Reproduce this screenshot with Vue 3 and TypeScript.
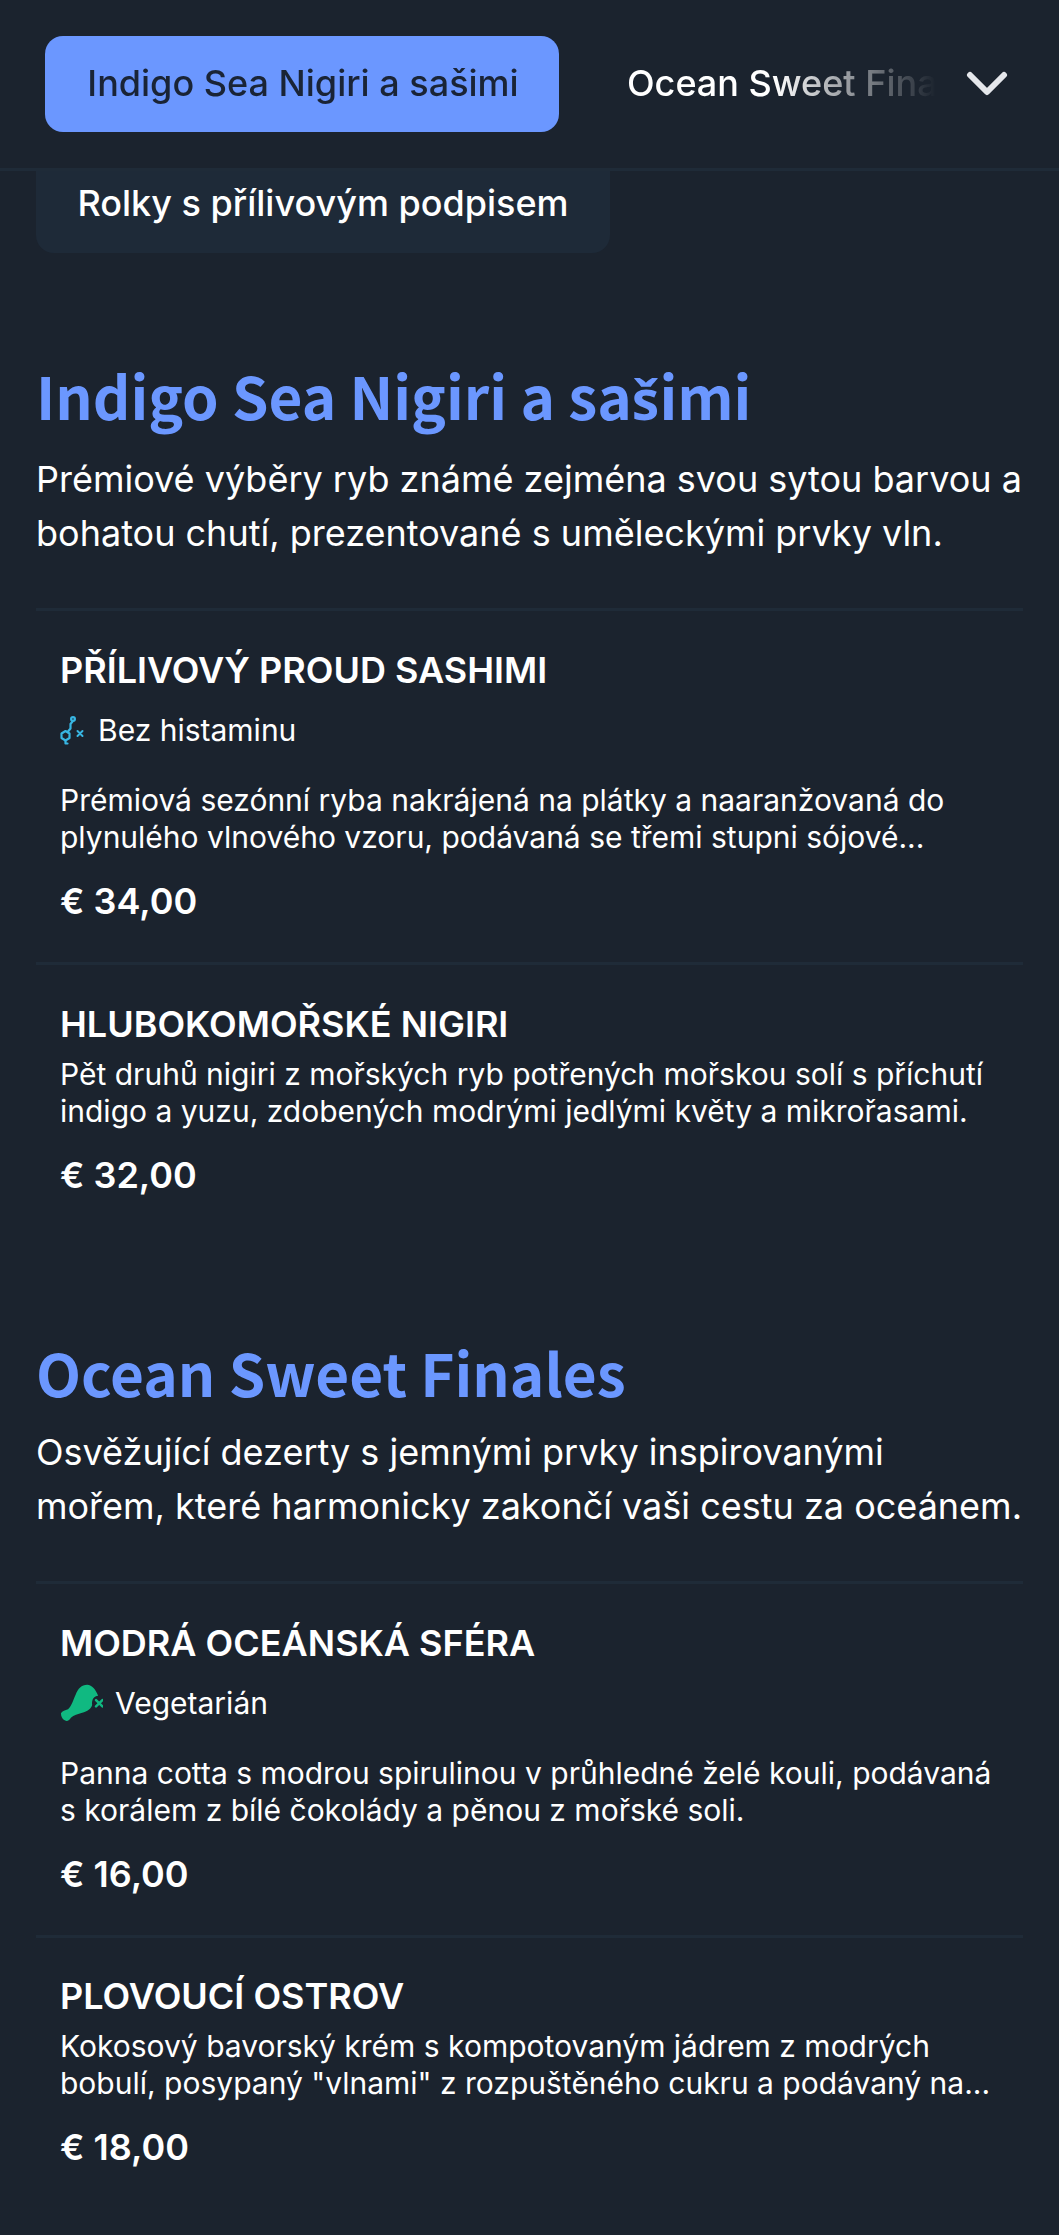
<script setup lang="ts">
interface Item { name: string; desc: string[]; price: string; tag?: 'his' | 'veg'; tagText?: string }
interface Section { title: string; desc: string[]; items: Item[] }
const sections: Section[] = [
  {
    title: 'Indigo Sea Nigiri a sašimi',
    desc: ['Prémiové výběry ryb známé zejména svou sytou barvou a', 'bohatou chutí, prezentované s uměleckými prvky vln.'],
    items: [
      { name: 'PŘÍLIVOVÝ PROUD SASHIMI', tag: 'his', tagText: 'Bez histaminu', desc: ['Prémiová sezónní ryba nakrájená na plátky a naaranžovaná do', 'plynulého vlnového vzoru, podávaná se třemi stupni sójové...'], price: '€ 34,00' },
      { name: 'HLUBOKOMOŘSKÉ NIGIRI', desc: ['Pět druhů nigiri z mořských ryb potřených mořskou solí s příchutí', 'indigo a yuzu, zdobených modrými jedlými květy a mikrořasami.'], price: '€ 32,00' },
    ],
  },
  {
    title: 'Ocean Sweet Finales',
    desc: ['Osvěžující dezerty s jemnými prvky inspirovanými', 'mořem, které harmonicky zakončí vaši cestu za oceánem.'],
    items: [
      { name: 'MODRÁ OCEÁNSKÁ SFÉRA', tag: 'veg', tagText: 'Vegetarián', desc: ['Panna cotta s modrou spirulinou v průhledné želé kouli, podávaná', 's korálem z bílé čokolády a pěnou z mořské soli.'], price: '€ 16,00' },
      { name: 'PLOVOUCÍ OSTROV', desc: ['Kokosový bavorský krém s kompotovaným jádrem z modrých', 'bobulí, posypaný "vlnami" z rozpuštěného cukru a podávaný na...'], price: '€ 18,00' },
    ],
  },
]
const titleParts = (t: string): string[] => t.split('š')
</script>

<template>
  <div class="page">
    <header class="bar">
      <div class="tabs">
        <button class="tab active">Indigo Sea Nigiri a sašimi</button>
        <span class="tab-next">Ocean Sweet Finales</span>
      </div>
      <svg class="chev" viewBox="0 0 42 26" fill="none" stroke="#e5e7eb" stroke-width="6" stroke-linecap="round" stroke-linejoin="round">
        <path d="M4 4 L21 21 L38 4" />
      </svg>
    </header>

    <div class="subwrap"><button class="subtab">Rolky s přílivovým podpisem</button></div>

    <section v-for="s in sections" :key="s.title" class="section">
      <h2><template v-for="(part, i) in titleParts(s.title)" :key="i"><span v-if="i > 0" class="caron">š</span>{{ part }}</template></h2>
      <p class="lead"><span v-for="l in s.desc" :key="l">{{ l }}</span></p>
      <article v-for="it in s.items" :key="it.name" class="item">
        <h3 :class="{ tight: !it.tag }">{{ it.name }}</h3>
        <div v-if="it.tag" class="tag">
          <svg v-if="it.tag === 'his'" class="ic-his" viewBox="0 0 26 32" fill="none" stroke="#38b6e3" stroke-width="2.2" stroke-linecap="round" stroke-linejoin="round">
            <path d="M5.5 17 L9.5 19.5 V24 L5.5 26.5 L1.5 24 V19.5 Z" />
            <path d="M5.5 26.5 V29.5 H7.5" />
            <path d="M8 17.5 L10.5 14.5 V10 L12.5 7.5" />
            <circle cx="13" cy="5" r="1.9" />
            <path d="M17.5 17 L22.5 22 M22.5 17 L17.5 22" stroke-width="2" />
          </svg>
          <svg v-else class="ic-veg" viewBox="0 0 120 110">
            <path fill="#10b981" d="M2 85 C6 78 14 78 22 74 C32 66 36 50 44 32 C50 16 60 5 76 5 C90 6 100 18 107 36 C96 36 88 46 90 62 C88 72 76 80 62 84 C50 88 38 90 30 98 C26 106 18 110 10 104 C6 100 2 94 2 85 Z" />
            <path d="M101 48 L119 66 M119 48 L101 66" stroke="#10b981" stroke-width="7" stroke-linecap="round" />
          </svg>
          <span>{{ it.tagText }}</span>
        </div>
        <p class="desc" :class="{ spaced: it.tag }"><span v-for="l in it.desc" :key="l">{{ l }}</span></p>
        <div class="price">{{ it.price }}</div>
      </article>
    </section>
  </div>
</template>

<style>
html, body { margin: 0; background: #1b232e; }
</style>

<style scoped>
.page {
  width: 1059px;
  height: 2235px;
  overflow: hidden;
  background: #1b232e;
  color: #fff;
  font-family: Inter, "Liberation Sans", sans-serif;
}
.bar {
  height: 168px;
  box-sizing: content-box;
  border-bottom: 3px solid #1f2b38;
  display: flex;
  align-items: flex-start;
  padding-left: 45px;
}
.tabs {
  width: 891px;
  margin-top: 36px;
  display: flex;
  align-items: flex-start;
  overflow: hidden;
  white-space: nowrap;
  -webkit-mask-image: linear-gradient(to right, #000 0, #000 730px, transparent 891px);
  mask-image: linear-gradient(to right, #000 0, #000 730px, transparent 891px);
}
.tab {
  flex: none;
  width: 514px;
  height: 96px;
  border: 0;
  border-radius: 18px;
  background: #6b97ff;
  color: #1a2436;
  font: 500 36px Inter, sans-serif;
  padding: 0 0 3px 2px;
  margin-right: 68px;
}
.tab-next {
  font-size: 36px;
  font-weight: 500;
  line-height: 95px;
  color: #fff;
}
.chev {
  width: 42px;
  height: 26px;
  margin-top: 71px;
  margin-left: 30px;
  flex: none;
}
.subwrap { padding-left: 36px; }
.subtab {
  width: 574px;
  height: 82px;
  border: 0;
  border-radius: 0 0 18px 18px;
  background: #1e2a38;
  color: #fff;
  font: 500 36px Inter, sans-serif;
  padding: 0 0 18px;
  display: block;
}
.section { padding: 0 36px; }
.section + .section { margin-top: -6px; }
h2 {
  margin: 0;
  font: 700 58.5px/84px "Noto Sans CJK SC", sans-serif;
  color: #6b97ff;
  padding-top: 100px;
}
.caron { font-family: "Noto Sans", sans-serif; font-size: 55px; }
.lead { margin: 11px 0 0; font-size: 36px; line-height: 54px; font-weight: 400; }
.lead span, .desc span { display: block; white-space: nowrap; }
.item { border-top: 3px solid #1f2b38; padding: 23px 24px 0; box-sizing: border-box; }
.lead + .item { margin-top: 48px; }
h3 { margin: 0; font-size: 36px; font-weight: 600; line-height: 72px; }
h3.tight { line-height: 66px; margin-top: 2.5px; margin-bottom: -1px; }
.tag { display: flex; align-items: center; gap: 12px; font-size: 30px; line-height: 48px; }
.ic-his { width: 26px; height: 32px; flex: none; }
.ic-veg { width: 43px; height: 39px; flex: none; }
.desc { margin: 0; font-size: 30px; line-height: 37px; }
.desc.spaced { margin-top: 28px; }
.price { font-size: 36px; font-weight: 600; line-height: 54px; margin-top: 18px; padding-bottom: 34px; }
</style>
